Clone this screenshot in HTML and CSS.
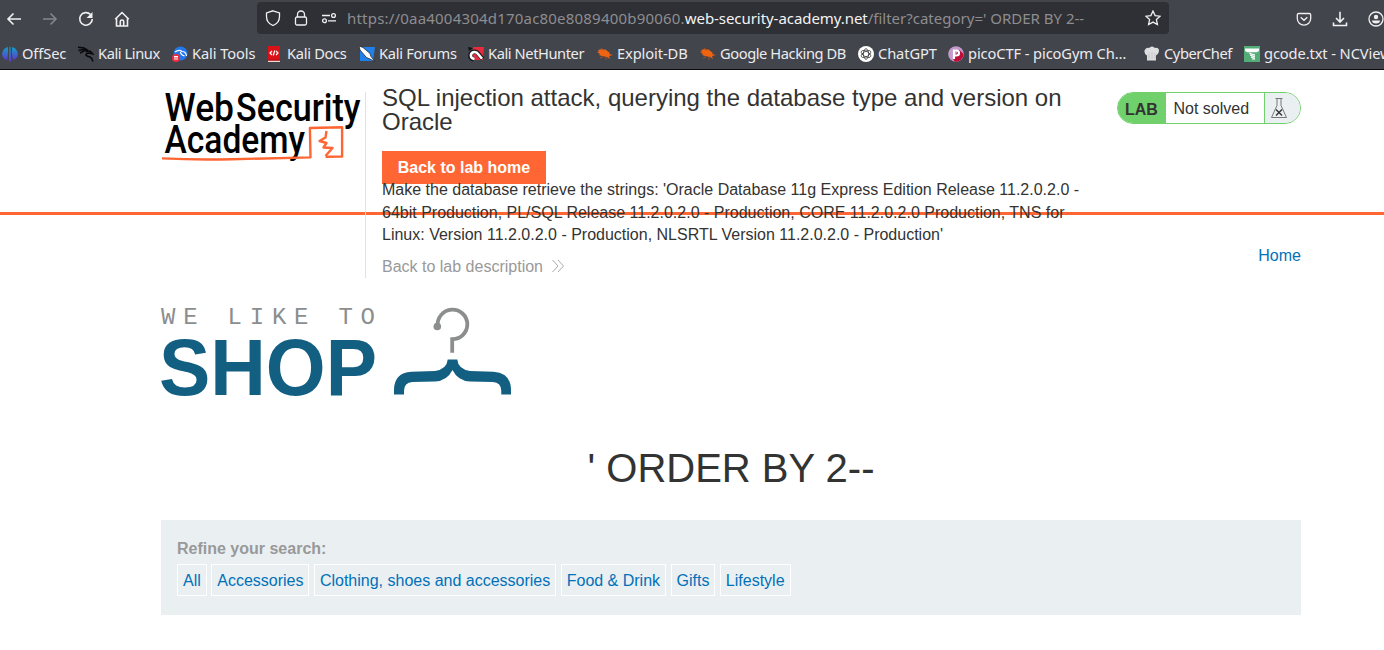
FILE: index.html
```html
<!DOCTYPE html>
<html lang="en">
<head>
<meta charset="utf-8">
<title>SQL injection attack, querying the database type and version on Oracle</title>
<link rel="stylesheet" href="styles.css">
</head>
<body>
<div class="chrome">
  <div class="toolbar">
    <div class="nav-icons">
      <svg class="ico" viewBox="0 0 16 16"><path d="M15 8H2M7.500 2.500 2 8l5.500 5.500"/></svg>
      <svg class="ico dim" viewBox="0 0 16 16"><path d="M1 8h13M8.500 2.500 14 8l-5.500 5.500"/></svg>
      <svg class="ico" viewBox="0 0 16 16"><path d="M12.500 3.500A6.300 6.300 0 1 0 14.300 8"/><path class="solid" d="M14.500 1v6h-6z"/></svg>
      <svg class="ico" viewBox="0 0 16 16"><path d="M1.200 8.200 8 1.500l6.800 6.700M2.500 7v8h11V7M6.300 15v-4.500q0-1.500 1.700-1.500t1.700 1.500V15"/></svg>
    </div>
    <div class="urlbar">
      <svg class="ico thin" viewBox="0 0 16 16"><path d="M8 .8 14.500 3v3.500C14.500 11 12 14 8 15.500 4 14 1.500 11 1.500 6.500V3z"/></svg>
      <svg class="ico thin lock" viewBox="0 0 16 16"><rect x="2.500" y="7" width="11" height="8" rx="1.500"/><path d="M4.500 7V4.500a3.500 3.500 0 0 1 7 0V7"/></svg>
      <svg class="ico thin tune" viewBox="0 0 16 16"><path d="M1 5.500h8M7 10.800h8"/><circle cx="12.500" cy="5.500" r="1.900"/><circle cx="3.500" cy="10.800" r="1.900"/></svg>
      <span class="url"><span class="sub">https://0aa4004304d170ac80e8089400b90060.</span><b>web-security-academy.net</b>/filter?category=' ORDER BY 2--</span>
      <svg class="ico thin star" viewBox="0 0 16 16"><path d="m8 1 2.100 4.600 5 .6-3.700 3.400 1 5L8 12.100l-4.400 2.500 1-5L.9 6.200l5-.6z"/></svg>
    </div>
    <div class="right-icons">
      <svg class="ico thin" viewBox="0 0 16 16"><path d="M2.700 2.500h10.600q1.400 0 1.400 1.500v3.500a6.700 6.700 0 0 1-13.400 0V4q0-1.500 1.400-1.500zM4.700 6.300 8 9.300l3.300-3"/></svg>
      <svg class="ico" viewBox="0 0 16 16"><path d="M8 .8v10M4 7l4 4 4-4M1.500 11.500v3h13v-3"/></svg>
      <svg class="ico thin" viewBox="0 0 16 16"><circle cx="8" cy="8" r="7"/><circle class="solid" cx="8" cy="6" r="2.200"/><path class="solid" d="M4 9.500h8q0 3-4 3t-4-3z"/></svg>
    </div>
  </div>
  <div class="bookmarks">
    <span class="bm w76"><svg viewBox="0 0 16 16"><defs><linearGradient id="os" x2="0" y2="1"><stop offset="0" stop-color="#159fc8"/><stop offset="1" stop-color="#5b3bd0"/></linearGradient></defs><g fill="url(#os)"><path d="M5.800 1Q6.600 8 5 14-1 12 .5 6 2 2 5.800 1z"/><path d="M10.200 1Q9.400 8 11 14 17 12 15.500 6 14 2 10.200 1z"/><path d="M7.500 1h1l.7 14.500H6.800z"/></g></svg><i class="t">OffSec</i></span>
    <span class="bm w94 tight"><svg viewBox="0 0 16 16"><path d="M0 1.200 6 2l4 2.500M.5 4.500 5 3.500l4 2M2 7l4-2M8 5.500l4-.5 3 3-4-1q-3 0-3 2 1 1.500 4 2 2 1 3 4.500" fill="none" stroke="#08090b" stroke-width="1.500"/></svg><i class="t">Kali Linux</i></span>
    <span class="bm w95"><svg viewBox="0 0 16 16"><circle cx="8.500" cy="7.500" r="7" fill="#2477e8"/><path d="M3 6q4-3 7-.500 4 0 4.500 4.500M8.500 6q0 2.800 4 4" fill="none" stroke="#fff" stroke-width="1.200"/><circle cx="4" cy="12" r="4" fill="#ec2d3c"/><path d="M2 10.500h4M3 10.500v3.500M5 10.500v3.500" stroke="#fff"/></svg><i class="t">Kali Tools</i></span>
    <span class="bm w92 snug"><svg viewBox="0 0 16 16"><path d="M1 0h12v16H1z" fill="#da1117"/><path d="M1 14.500h12V16H1z" fill="#f0d5d5"/><path d="M1 13.700h12v.8H1z" fill="#930b10"/><path d="M5 5 3 7l2 2M9 5l2 2-2 2M7.700 4.500 6.300 9.500" fill="none" stroke="#fff" stroke-width="1.200"/></svg><i class="t">Kali Docs</i></span>
    <span class="bm w109 snug"><svg viewBox="0 0 16 16"><path d="M1 1h15l-2 14H1z" fill="#217fea"/><path d="m0 0 4 1.500L11 7.500l1 3 4 5-5-2.500-3.500-1.500L1 4z" fill="#fff" stroke="#16171a" stroke-width=".7"/></svg><i class="t">Kali Forums</i></span>
    <span class="bm w129 tight"><svg viewBox="0 0 16 16"><path d="M5 1h11l-1 13H3z" fill="#e52b3d"/><path d="M6 13.500Q1.500 12 2.500 8.500C4 4.500 8.500 5 10.500 8l4 5" fill="none" stroke="#17181c" stroke-width="4.400"/><path d="M6.500 13Q2 12 3 8.500C4.500 5 8.500 5.500 10.500 8.500l3.500 4.300" fill="none" stroke="#fff" stroke-width="2.600"/><path d="m0 1 5 1-4 3z" fill="#111"/></svg><i class="t">Kali NetHunter</i></span>
    <span class="bm w103"><svg viewBox="0 0 16 16"><path d="m1 4 4-1 4 1 4 3-1 1 4 1-4 1 1 3-3-2-5-1-3-1 1-1-3-2 2-.5z" fill="#ef6411"/><path d="m4 2 2 3M8 3l2 2m-4 6-3 1m6-1 0 3" stroke="#b95222" stroke-width=".8"/></svg><i class="t">Exploit-DB</i></span>
    <span class="bm w158 tight"><svg viewBox="0 0 16 16"><path d="m1 4 4-1 4 1 4 3-1 1 4 1-4 1 1 3-3-2-5-1-3-1 1-1-3-2 2-.5z" fill="#ef6411"/><path d="m4 2 2 3M8 3l2 2m-4 6-3 1m6-1 0 3" stroke="#b95222" stroke-width=".8"/></svg><i class="t">Google Hacking DB</i></span>
    <span class="bm w90"><svg viewBox="0 0 16 16"><circle cx="8" cy="8" r="8" fill="#fff"/><g fill="none" stroke="#333" stroke-width=".75"><ellipse cx="8" cy="8" rx="2.600" ry="5.300"/><ellipse cx="8" cy="8" rx="2.600" ry="5.300" transform="rotate(60 8 8)"/><ellipse cx="8" cy="8" rx="2.600" ry="5.300" transform="rotate(120 8 8)"/></g></svg><i class="t">ChatGPT</i></span>
    <span class="bm w196"><svg viewBox="0 0 16 16"><circle cx="8" cy="8" r="7.800" fill="#c49acb"/><path d="M11 3.500 15.600 8A7.800 7.800 0 0 1 7 15.700L5 13z" fill="#bf0d38"/><path d="M6 13V4.500h2.500a2.400 2.400 0 0 1 0 5H6" fill="none" stroke="#fff" stroke-width="2.200"/></svg><i class="t">picoCTF - picoGym Ch…</i></span>
    <span class="bm w100 tight"><svg viewBox="0 0 16 16"><path d="M3 14.500V9.500Q0 8 .5 4.500 2 1 5 2q3-3 6 0 3-1 4 2 0 3.500-3 5.500v5z" fill="#dedfe0"/><path d="M5 7v6M8 6v7M11 7v6" stroke="#c4c4c4"/></svg><i class="t">CyberChef</i></span>
    <span class="bm"><svg viewBox="0 0 16 16"><path d="M0 0h16v16H0z" fill="#54ac79"/><path d="M1 2.500h14v2.200l-2 1.600H3L1 4.700z" fill="#fff"/><path d="m5 7 6 2H6l5 2H7l4 2H8" fill="none" stroke="#fff"/></svg><i class="t">gcode.txt - NCViewer</i></span>
  </div>
</div>

<header class="lab-header">
  <div class="container header-row">
    <svg class="academy-logo" viewBox="0 0 204 76">
      <g class="academy-text"><text x="3.500" y="29" textLength="69.500" lengthAdjust="spacingAndGlyphs">Web</text><text x="75" y="29" textLength="124.500" lengthAdjust="spacingAndGlyphs">Security</text><text x="3.500" y="61" textLength="140.500" lengthAdjust="spacingAndGlyphs">Academy</text></g>
      <path class="sketch" d="M1 66.400q35 1.800 70 .8l79-1.800M149.500 66l-.6-30 32.200-.8V64.500l-16.500 .3"/>
      <path class="sketch" d="m165.500 39-1 6.500-6 3.500 7 2-3 4.500 9 .5-7 8"/>
    </svg>
    <div class="title-box">
      <h2>SQL injection attack, querying the database type and version on Oracle</h2>
      <a class="button">Back to lab home</a>
      <p class="hint">Make the database retrieve the strings: 'Oracle Database 11g Express Edition Release 11.2.0.2.0 - 64bit Production, PL/SQL Release 11.2.0.2.0 - Production, CORE 11.2.0.2.0 Production, TNS for Linux: Version 11.2.0.2.0 - Production, NLSRTL Version 11.2.0.2.0 - Production'</p>
      <a class="back">Back to lab description <svg viewBox="0 0 12 14"><path d="m.5 1 5.500 6-5.500 6M6 1l5.500 6L6 13"/></svg></a>
    </div>
    <div class="status">
      <span class="lab">LAB</span><span class="state">Not solved</span>
      <span class="flask"><svg viewBox="0 0 18 22"><path d="M5.500 1.500h7M7 1.500v7L1.500 20.500h15L11 8.500v-7"/><path class="x" d="m6 12.500 6 6m0-6-6 6"/></svg></span>
    </div>
  </div>
</header>

<main class="container">
  <nav class="top-links"><a>Home</a></nav>
  <svg class="shop-logo" viewBox="0 0 352 92">
    <text class="like" x="0" y="18" textLength="214">WE LIKE TO</text>
    <text class="shop" x="-2" y="88.500" textLength="218" lengthAdjust="spacingAndGlyphs">SHOP</text>
    <path class="hook" d="M276.800 20A14.800 14.800 0 1 1 291.200 33.200V46.700"/>
    <circle cx="276.300" cy="20.500" r="3.800" fill="#8c8e8e"/>
    <path class="hanger" d="M233 88.500V84q0-17 17.500-18.200l23.500-.8q12-2 12.700-11.500h9.600Q297 63 309 65l23.500.8Q350 67 350 84v4.500h-9.700V85q0-8.500-8.500-9L309 75.500Q297 75 291.500 64 286 75 274 75.500l-22.500.5q-8.500.5-8.500 9v3.500z"/>
  </svg>
  <h1>' ORDER BY 2--</h1>
  <section class="filters">
    <label>Refine your search:</label>
    <div class="chips"><a>All</a><a>Accessories</a><a>Clothing, shoes and accessories</a><a>Food &amp; Drink</a><a>Gifts</a><a>Lifestyle</a></div>
  </section>
</main>
</body>
</html>
```
FILE: styles.css
```css
* { box-sizing: border-box; }
body { margin: 0; height: 650px; overflow: hidden; background: #fff; color: #333332; font: 16px "Liberation Sans", Arial, sans-serif; }

.chrome { height: 70px; overflow: hidden; background: #43454d; border-bottom: 1px solid #0c0c0d; font: 15px "Noto Sans", sans-serif; color: #ececed; }
.toolbar { display: flex; height: 37px; align-items: center; }
.nav-icons { display: flex; gap: 20px; padding-left: 6px; width: 257px; }
.ico { width: 16px; height: 16px; flex: none; fill: none; stroke: #f0f0f1; stroke-width: 1.6; }
.thin { stroke-width: 1.3; }
.dim { stroke: #85868b; }
.solid { fill: #f0f0f1; stroke: none; }
.urlbar { display: flex; align-items: center; width: 912px; height: 32px; padding: 0 8px; margin-top: -1px; background: #2f3035; border-radius: 4px; }
.lock { margin-left: 12px; }
.tune { margin-left: 12px; }
.url { flex: 1; margin-left: 10px; color: #8d8d90; white-space: nowrap; }
.sub { letter-spacing: .2px; }
.url b { font-weight: 400; color: #f3f3f4; letter-spacing: -.06px; }
.right-icons { display: flex; gap: 20px; margin-left: 127px; }
.bookmarks { display: flex; padding-left: 2px; height: 33px; align-items: center; font-size: 14.67px; }
.bm { display: flex; flex: none; align-items: center; gap: 4px; white-space: nowrap; letter-spacing: -.1px; }
.bm svg { width: 16px; height: 16px; flex: none; }
.t { font-style: normal; margin-top: -2px; }
.snug { letter-spacing: -.3px; }
.tight { letter-spacing: -.42px; }
.w76 { width: 76px; }
.w94 { width: 94px; }
.w95 { width: 95px; }
.w92 { width: 92px; }
.w109 { width: 109px; }
.w129 { width: 129px; }
.w103 { width: 103px; }
.w158 { width: 158px; }
.w90 { width: 90px; }
.w196 { width: 196px; }
.w100 { width: 100px; }

.container { width: 1140px; margin: 0 auto; position: relative; left: 39px; }
.lab-header { height: 145px; border-bottom: 3px solid #ff6633; }
.header-row { display: flex; align-items: flex-start; padding-top: 22px; }
.academy-logo { width: 204px; height: 76px; flex: none; overflow: visible; }
.academy-text { font: 500 38.5px Roboto, sans-serif; fill: #000; }
.sketch { fill: none; stroke: #ff6633; stroke-width: 2.4; stroke-linejoin: round; }
.title-box { width: 752px; height: 186px; padding-left: 16px; border-left: 1px solid #e2e2e2; flex: none; }
h2 { margin: -6px 0 17px; width: 700px; font-size: 24px; font-weight: 400; line-height: 24px; }
.button { display: block; width: 164px; height: 33px; background: #ff6633; color: #fff; font-weight: 700; line-height: 33px; text-align: center; }
.hint { margin: -5px 0 0; width: 704px; line-height: 22.6px; }
.back { display: flex; align-items: center; gap: 9px; margin-top: 11px; color: #999; line-height: 18px; }
.back svg { width: 12px; height: 14px; fill: none; stroke: #aaa; position: relative; top: -1px; }
.status { display: flex; width: 184px; height: 32px; border: 1px solid #70d06c; border-radius: 16px; overflow: hidden; line-height: 31px; }
.lab { width: 48px; padding-left: 7px; background: #70d06c; font-weight: 700; line-height: 33px; }
.state { flex: 1; padding-left: 7.5px; }
.flask { width: 36px; border-left: 1px solid #70d06c; background: #eaeff2; padding: 4px 0 0 5px; }
.flask svg { display: block; width: 18px; height: 22px; fill: none; stroke: #777; }
.flask .x { stroke: #333; stroke-width: 1.4; }

.top-links { display: flex; justify-content: flex-end; padding-top: 31px; line-height: 19px; }
a { color: #0071b9; }
.top-links + .shop-logo { display: block; width: 352px; height: 92px; margin-top: 41px; overflow: visible; }
.like { font: 24px "Liberation Mono", monospace; fill: #8c8e8e; }
.shop { font: 700 80px "Liberation Sans", sans-serif; fill: #125f82; }
.hook { fill: none; stroke: #8c8e8e; stroke-width: 3.8; }
.hanger { fill: #125f82; }
h1 { margin: 46px 0 28px; font-size: 40px; line-height: 48px; font-weight: 400; text-align: center; }
.filters { height: 95px; padding: 19px 16px; background: #eaeff2; }
.filters label { display: block; color: #999; font-weight: 700; line-height: 20px; }
.chips { display: flex; gap: 4.45px; margin-top: 5px; }
.chips a { height: 32px; padding: 0 5px; border: 1px solid #fff; line-height: 31px; }
.button { color: #fff; }
.back { color: #999; }
```
